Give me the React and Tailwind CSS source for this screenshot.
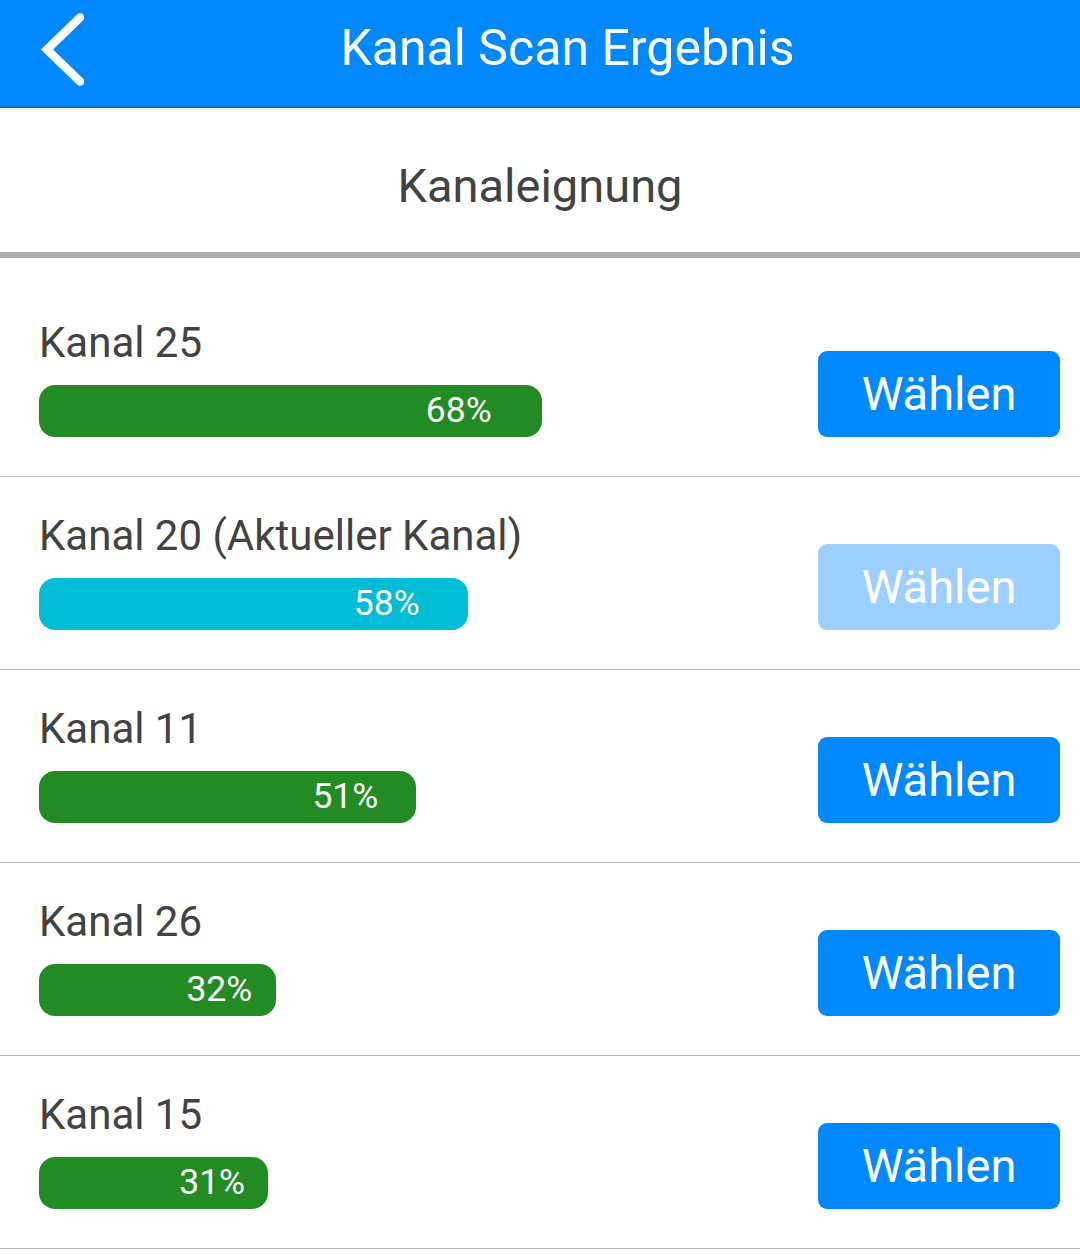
const channels = [
  { name: "Kanal 25", pct: 68 },
  { name: "Kanal 20 (Aktueller Kanal)", pct: 58, current: true },
  { name: "Kanal 11", pct: 51 },
  { name: "Kanal 26", pct: 32 },
  { name: "Kanal 15", pct: 31 },
];

function BackIcon() {
  return (
    <svg width="60" height="90" viewBox="0 0 60 90" className="block">
      <polyline
        points="50,13.5 17,45.5 50,77.5"
        fill="none"
        stroke="white"
        strokeWidth="8.5"
        strokeLinecap="round"
        strokeLinejoin="miter"
      />
    </svg>
  );
}

function ChannelRow({ name, pct, current }) {
  // Balkenbreite: 740px entspricht 100%
  const barWidth = Math.round(pct * 7.4);
  return (
    <div className="flex items-end justify-between border-b border-[#b5b5b5] pl-[39px] pr-[20px] pt-[34px] pb-[39px]">
      <div className="flex flex-col">
        <div className="text-[42px] leading-[50px] text-[#424242]">{name}</div>
        <div
          className={`mt-[17px] flex h-[52px] items-center justify-end rounded-[16px] pr-[10%] text-[35.5px] text-white ${current ? "bg-[#00bcd4]" : "bg-[#238b23]"
            }`}
          style={{ width: barWidth }}
        >
          {pct}%
        </div>
      </div>
      <button
        className={`flex h-[86px] w-[242px] items-center justify-center rounded-[9px] text-[47px] text-white ${current ? "bg-[#9ccffd]" : "bg-[#0088ff]"
          }`}
      >
        Wählen
      </button>
    </div>
  );
}

export default function App() {
  return (
    <div
      className="min-h-[1256px] w-[1080px] bg-white"
      style={{ fontFamily: "Roboto, 'Liberation Sans', sans-serif" }}
    >
      <header className="flex h-[108px] items-center border-b-2 border-[#006fd6] bg-[#0088ff] pb-[9px]">
        <div className="ml-[30px] w-[56px]">
          <BackIcon />
        </div>
        <h1 className="mr-[31px] flex-1 text-center text-[50px] font-normal text-white">
          Kanal Scan Ergebnis
        </h1>
      </header>

      <div className="flex h-[144px] items-center justify-center pt-[12px] text-[47px] text-[#424242]">
        Kanaleignung
      </div>
      <div className="h-[6px] bg-[#acacac]" />

      <div className="mt-[26px]">
        {channels.map((c, i) => (
          <ChannelRow key={i} {...c} />
        ))}
      </div>
    </div>
  );
}
